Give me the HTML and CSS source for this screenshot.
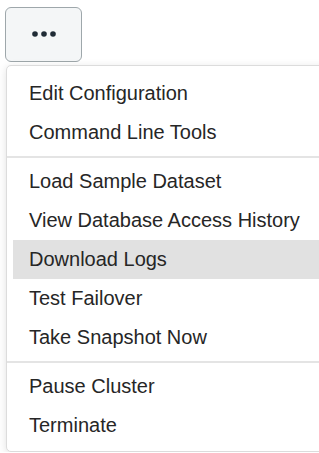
FILE: index.html
```html
<!DOCTYPE html>
<html lang="en">
<head>
    <meta charset="UTF-8">
    <meta name="viewport" content="width=device-width, initial-scale=1.0">
    <title>Cluster Actions</title>
    <link rel="stylesheet" href="styles.css">
</head>
<body>
    <div class="actions">
        <button type="button" class="more-button" aria-label="More actions">
            <svg width="24" height="8" viewBox="0 0 24 8">
                <circle cx="3" cy="4" r="2.8" fill="#1f2b36"/>
                <circle cx="12" cy="4" r="2.8" fill="#1f2b36"/>
                <circle cx="21" cy="4" r="2.8" fill="#1f2b36"/>
            </svg>
        </button>

        <ul class="menu">
            <li class="menu-item">Edit Configuration</li>
            <li class="menu-item">Command Line Tools</li>
            <li class="menu-divider"></li>
            <li class="menu-item">Load Sample Dataset</li>
            <li class="menu-item">View Database Access History</li>
            <li class="menu-item active">Download Logs</li>
            <li class="menu-item">Test Failover</li>
            <li class="menu-item">Take Snapshot Now</li>
            <li class="menu-divider"></li>
            <li class="menu-item">Pause Cluster</li>
            <li class="menu-item">Terminate</li>
        </ul>
    </div>
</body>
</html>
```

FILE: styles.css
```css
html, body {
    margin: 0;
    overflow: hidden;
    background-color: #fff;
}
body {
    font-family: "Liberation Sans", Arial, sans-serif;
    color: #262626;
}
.actions {
    padding: 7px 0 0 5px;
}
.more-button {
    display: flex;
    align-items: center;
    justify-content: center;
    box-sizing: border-box;
    width: 77px;
    height: 55px;
    padding: 0 0 2px;
    background-color: #f4f6f7;
    border: 1.5px solid #9ea7ab;
    border-radius: 6px;
    cursor: pointer;
}
.menu {
    list-style: none;
    width: 322px;
    margin: 3px 0 0 1px;
    padding: 8px 0 6px;
    background-color: #fff;
    border: 1px solid #dcdcdc;
    border-radius: 5px;
    box-shadow: 0 2px 8px rgba(0,0,0,0.12);
}
.menu-item {
    height: 39px;
    line-height: 39px;
    margin: 0 6px;
    padding-left: 16px;
    font-size: 20px;
    white-space: nowrap;
    cursor: pointer;
}
.menu-item.active {
    background-color: #e1e1e1;
}
.menu-divider {
    height: 2px;
    margin: 4px 0;
    background-color: #e4e4e4;
}
```
